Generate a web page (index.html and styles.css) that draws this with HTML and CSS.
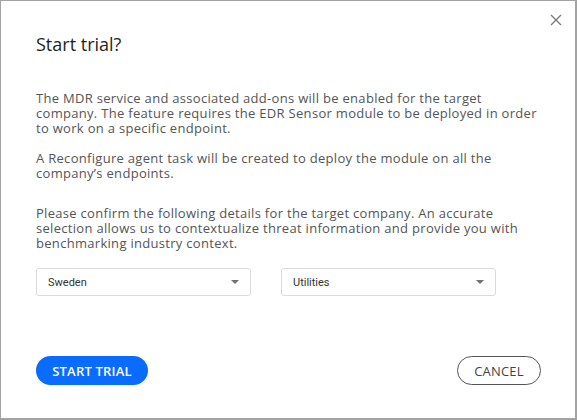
FILE: index.html
```html
<!DOCTYPE html>
<html lang="en">
<head>
<meta charset="utf-8">
<title>Start trial?</title>
<link rel="stylesheet" href="styles.css">
</head>
<body>
<div class="dialog">
  <button class="close" aria-label="Close">
    <svg width="12" height="12" viewBox="0 0 12 12"><path d="M1 1L11 11M11 1L1 11" stroke="#7a7a7a" stroke-width="1.4" fill="none"/></svg>
  </button>
  <h1 class="title">Start trial?</h1>
  <p class="text first">The MDR service and associated add-ons will be enabled for the target company. The feature requires the EDR Sensor module to be deployed in order to work on a specific endpoint.</p>
  <p class="text second">A Reconfigure agent task will be created to deploy the module on all the company’s endpoints.</p>
  <p class="text third">Please confirm the following details for the target company. An accurate selection allows us to contextualize threat information and provide you with benchmarking industry context.</p>
  <div class="selects">
    <div class="select"><span class="value">Sweden</span><span class="arrow"></span></div>
    <div class="select"><span class="value">Utilities</span><span class="arrow"></span></div>
  </div>
  <div class="actions">
    <button class="btn primary">START TRIAL</button>
    <button class="btn secondary">CANCEL</button>
  </div>
</div>
</body>
</html>
```
FILE: styles.css
```css
html, body {
  margin: 0;
  padding: 0;
  background: #ffffff;
}
.dialog {
  position: relative;
  width: 577px;
  height: 420px;
  box-sizing: border-box;
  border-style: solid;
  border-color: #a3a3a3;
  border-width: 1px 2px 2px 1px;
  padding: 31px 34px 0 35px;
  font-family: "Open Sans", "Liberation Sans", sans-serif;
  display: flex;
  flex-direction: column;
}
.close {
  position: absolute;
  top: 12px;
  right: 12px;
  width: 14px;
  height: 14px;
  padding: 0;
  border: 0;
  background: none;
  display: flex;
  align-items: center;
  justify-content: center;
}
.title {
  margin: 0;
  font-size: 18px;
  line-height: 24px;
  font-weight: 400;
  color: #1f1f1f;
}
.text {
  margin: 0;
  font-size: 13px;
  line-height: 15px;
  letter-spacing: 0.3px;
  color: #555555;
}
.first { margin-top: 34.5px; }
.second { margin-top: 15px; }
.third { margin-top: 25px; }
.selects {
  margin-top: 17.5px;
  display: flex;
  gap: 30px;
}
.select {
  width: 215px;
  height: 28px;
  box-sizing: border-box;
  border: 1px solid #dcdcdc;
  border-radius: 3px;
  padding: 0 11px 0 11px;
  display: flex;
  align-items: center;
  justify-content: space-between;
  font-family: Roboto, "Liberation Sans", sans-serif;
  font-size: 11px;
  color: #333333;
}
.arrow {
  width: 0;
  height: 0;
  border-left: 4.5px solid transparent;
  border-right: 4.5px solid transparent;
  border-top: 4.5px solid #707070;
}
.actions {
  margin-top: 60px;
  display: flex;
  justify-content: space-between;
  align-items: center;
}
.btn {
  font-family: "Open Sans", "Liberation Sans", sans-serif;
  font-size: 13px;
  height: 29px;
  border-radius: 15px;
  box-sizing: border-box;
  padding: 0;
  display: flex;
  align-items: center;
  justify-content: center;
  letter-spacing: 0.2px;
}
.primary {
  width: 112px;
  background: #0a6cff;
  color: #ffffff;
  border: 0;
  font-weight: 600;
}
.secondary {
  width: 84px;
  background: #ffffff;
  color: #444444;
  border: 1px solid #555555;
  font-weight: 400;
}
```
